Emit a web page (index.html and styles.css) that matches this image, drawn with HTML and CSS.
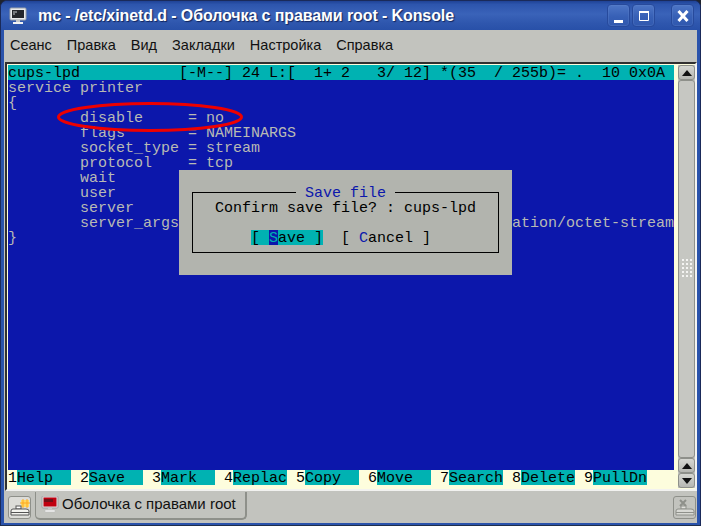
FILE: index.html
```html
<!DOCTYPE html>
<html lang="ru">
<head>
<meta charset="utf-8">
<title>Konsole</title>
<link rel="stylesheet" href="styles.css">
</head>
<body>
<div class="window">
  <header class="titlebar">
    <svg class="app-icon" width="18" height="18" viewBox="0 0 18 18"><rect x="1" y="1" width="16" height="12" rx="1" fill="#e8eaec" stroke="#9aa0a8"/><rect x="3" y="3" width="12" height="8" fill="#23262c"/><path d="M4 5h4M4 7h2" stroke="#c8ccd0"/><path d="M7 13h4v2H7z" fill="#c4c8cc"/><path d="M4 15h10v2H4z" fill="#f2f3f4"/></svg>
    <span class="title">mc - /etc/xinetd.d - Оболочка с правами root - Konsole</span>
    <div class="win-buttons">
      <button class="win-btn"><svg width="14" height="14" viewBox="0 0 14 14"><path d="M2 11h9v3H2z" fill="#fff"/></svg></button>
      <button class="win-btn"><svg width="14" height="14" viewBox="0 0 14 14"><path d="M2.500 2.500h9v9h-9z" fill="none" stroke="#fff"/><path d="M2 2h10v2H2z" fill="#fff"/></svg></button>
      <button class="win-btn win-close"><svg width="14" height="14" viewBox="0 0 14 14"><path d="M2.500 2l9 10M11.500 2l-9 10" stroke="#fff" stroke-width="3"/></svg></button>
    </div>
  </header>
  <div class="content">
    <nav class="menubar">
      <span>Сеанс</span><span>Правка</span><span>Вид</span><span>Закладки</span><span>Настройка</span><span>Справка</span>
    </nav>
    <div class="frame">
      <div class="terminal">
        <pre class="status">cups-lpd           [-M--] 24 L:[  1+ 2   3/ 12] *(35  / 255b)= .  10 0x0A</pre>
        <pre class="editor">service printer
{
        disable     = no
        flags       = NAMEINARGS
        socket_type = stream
        protocol    = tcp
        wait
        user
        server
        server_args                                     ation/octet-stream
}</pre>
        <div class="fkeys">
          <div class="fkey first"><span class="num">1</span><span class="fn">Help</span></div>
          <div class="fkey"><span class="num">2</span><span class="fn">Save</span></div>
          <div class="fkey"><span class="num">3</span><span class="fn">Mark</span></div>
          <div class="fkey"><span class="num">4</span><span class="fn">Replac</span></div>
          <div class="fkey"><span class="num">5</span><span class="fn">Copy</span></div>
          <div class="fkey"><span class="num">6</span><span class="fn">Move</span></div>
          <div class="fkey"><span class="num">7</span><span class="fn">Search</span></div>
          <div class="fkey"><span class="num">8</span><span class="fn">Delete</span></div>
          <div class="fkey"><span class="num">9</span><span class="fn">PullDn</span></div>
        </div>
        <svg class="annotation" width="190" height="34" viewBox="0 0 190 34"><ellipse cx="95" cy="17" rx="91.500" ry="13.500" fill="none" stroke="#ee0000" stroke-width="3"/></svg>
        <div class="dialog">
          <div class="dialog-box">
            <span class="dialog-title">Save file</span>
            <div class="dialog-msg">Confirm save file? : cups-lpd</div>
            <div class="dialog-actions">
              <span class="dbtn dbtn-on">[ <b class="hot-on">S</b>ave ]</span>
              <span class="dbtn">[ <b class="hot">C</b>ancel ]</span>
            </div>
          </div>
        </div>
      </div>
      <div class="scrollbar">
        <div class="sb-btn"><svg width="10" height="6" viewBox="0 0 10 6"><path d="M5 0l5 6H0z" fill="#111"/></svg></div>
        <div class="sb-slider">
          <svg width="10" height="18" viewBox="0 0 10 18"><g fill="#f4f4f2"><rect x="0" y="0" width="2" height="2"/><rect x="4" y="0" width="2" height="2"/><rect x="8" y="0" width="2" height="2"/><rect x="0" y="4" width="2" height="2"/><rect x="4" y="4" width="2" height="2"/><rect x="8" y="4" width="2" height="2"/><rect x="0" y="8" width="2" height="2"/><rect x="4" y="8" width="2" height="2"/><rect x="8" y="8" width="2" height="2"/><rect x="0" y="12" width="2" height="2"/><rect x="4" y="12" width="2" height="2"/><rect x="8" y="12" width="2" height="2"/><rect x="0" y="16" width="2" height="2"/><rect x="4" y="16" width="2" height="2"/><rect x="8" y="16" width="2" height="2"/></g></svg>
        </div>
        <div class="sb-btn"><svg width="10" height="6" viewBox="0 0 10 6"><path d="M5 0l5 6H0z" fill="#111"/></svg></div>
        <div class="sb-btn"><svg width="10" height="6" viewBox="0 0 10 6"><path d="M0 0h10L5 6z" fill="#111"/></svg></div>
      </div>
    </div>
    <div class="tabbar">
      <button class="tool-btn tool-new"><svg width="20" height="18" viewBox="0 0 20 18"><path d="M11 1h8v7h-8z" fill="#ffd860"/><path d="M13 0v9M17 0v9M10 4h10" stroke="#ffa820"/><rect x="6" y="7" width="5" height="3" fill="#fff" stroke="#555"/><path d="M1 16v-4q0-2 2-2h13q3 0 3 2v4z" fill="#f4f4f0" stroke="#555"/><path d="M1 13.500h18" stroke="#555"/></svg></button>
      <div class="tab">
        <svg width="18" height="17" viewBox="0 0 18 17"><rect x="1" y="0" width="16" height="12" rx="1" fill="#e4e4e4" stroke="#a0a0a0"/><rect x="2.500" y="1.500" width="13" height="9" fill="#c00010"/><path d="M3 3h9v3H3z" fill="#701018"/><path d="M7 12h4v2H7z" fill="#c8c8c8"/><path d="M4 14h10v2H4z" fill="#f2f2f2" stroke="#bbb" stroke-width=".5"/></svg>
        <span>Оболочка с правами root</span>
      </div>
      <button class="tool-btn tool-close"><svg width="20" height="18" viewBox="0 0 20 18"><path d="M5 1l6 6M11 1L5 7" stroke="#8e908a" stroke-width="2"/><rect x="6" y="7" width="5" height="3" fill="#e0e0dc" stroke="#8e908a"/><path d="M1 16v-4q0-2 2-2h13q3 0 3 2v4z" fill="#d8d9d4" stroke="#8e908a"/><path d="M1 13.500h18" stroke="#8e908a"/></svg></button>
    </div>
  </div>
</div>
</body>
</html>
```
FILE: styles.css
```css
* { box-sizing: border-box; }
html, body { margin: 0; padding: 0; background: #20242c; }
body { width: 701px; height: 526px; overflow: hidden; }
pre { margin: 0; font: inherit; }
button { margin: 0; padding: 0; font: inherit; }

.window {
  display: flex;
  flex-direction: column;
  height: 526px;
  background: #2a53ab;
  border: 1px solid #1a2a5a;
  border-bottom-color: #20304c;
  border-radius: 7px 7px 0 0;
  overflow: hidden;
}

.titlebar {
  flex: 0 0 29px;
  display: flex;
  align-items: center;
  padding: 0 6px 0 8px;
  background: linear-gradient(#1f4296 0, #2d55ad 12%, #3a63b9 45%, #2f57ae 75%, #2850a8 100%);
  color: #fff;
}
.app-icon { flex: none; }
.title {
  margin-left: 11px;
  font: bold 16px/20px "Liberation Sans", sans-serif;
  letter-spacing: -0.1px;
  white-space: nowrap;
  text-shadow: 1px 1px 1px #10245c;
}
.win-buttons { margin-left: auto; display: flex; gap: 2px; }
.win-btn {
  width: 23px;
  height: 23px;
  display: flex;
  align-items: center;
  justify-content: center;
  background: linear-gradient(#4e76c6, #3760b6 55%, #3058ae);
  border: 1px solid #274a9c;
  border-radius: 4px;
  box-shadow: inset 0 0 0 1px #5f84cc55;
}
.win-close { margin-left: 14px; }

.content {
  flex: 1;
  display: flex;
  flex-direction: column;
  min-height: 0;
  margin: 0 3px 2px;
  background: #c2c3be;
}

.menubar {
  flex: 0 0 30px;
  display: flex;
  align-items: center;
  gap: 15px;
  padding: 0 6px;
  font: 14.500px/16px "Liberation Sans", sans-serif;
  color: #111;
}

.frame {
  flex: 0 0 428px;
  margin-top: 2px;
  margin-left: 1px;
  display: flex;
  background: #fdfddd;
  border: 2px solid;
  border-color: #303030 #f2f2f0 #f2f2f0 #303030;
  padding: 1px 0 1px 1px;
}

.terminal {
  position: relative;
  flex: 0 0 666px;
  height: 420px;
  display: flex;
  flex-direction: column;
  background: #0c17ab;
  font: 15px/15px "Liberation Mono", monospace;
  color: #b8bab4;
}
.status {
  background: #00b2b2;
  color: #000;
  height: 15px;
  padding-top: 1px;
}
.editor {
  flex: 1;
  padding-top: 1px;
}
.fkeys {
  display: flex;
  height: 15px;
  background: #fdfddd;
  color: #000;
}
.fkey { display: flex; padding-left: 9px; }
.fkey.first { padding-left: 0; }
.fkey .num { width: 9px; padding-top: 1px; }
.fkey .fn { width: 54px; height: 15px; padding-top: 1px; background: #00b2b2; }

.annotation {
  position: absolute;
  left: 47px;
  top: 35px;
}

.dialog {
  position: absolute;
  left: 171px;
  top: 105px;
  width: 333px;
  height: 105px;
  padding: 22px 13px;
  background: #b2b4ae;
  color: #000;
}
.dialog-box {
  position: relative;
  height: 61px;
  border: 1px solid #000;
  padding: 7px 0 0 22px;
}
.dialog-title {
  position: absolute;
  left: 103px;
  top: -8px;
  height: 15px;
  padding: 1px 9px 0;
  background: #b2b4ae;
  color: #0c17ab;
  white-space: pre;
}
.dialog-msg { height: 30px; padding-top: 1px; white-space: pre; }
.dialog-actions {
  display: flex;
  gap: 18px;
  margin-left: 36px;
}
.dbtn { display: block; height: 15px; padding-top: 1px; white-space: pre; }
.dbtn b { font-weight: normal; }
.dbtn-on { background: #00b2b2; }
.hot-on {
  display: inline-block;
  height: 14px;
  background: #0c17ab;
  box-shadow: 0 -1px 0 #0c17ab;
  color: #00b2b2;
}
.hot { color: #0c17ab; }

.scrollbar {
  flex: 0 0 17px;
  margin-left: 4px;
  display: flex;
  flex-direction: column;
  height: 423px;
  background: #c2c3be;
}
.sb-btn {
  flex: 0 0 15px;
  display: flex;
  align-items: center;
  justify-content: center;
  background: linear-gradient(#d6d7d2, #b6b7b2);
  border: 1px solid #8e908a;
  border-radius: 3px;
}
.sb-slider {
  flex: 1;
  display: flex;
  align-items: flex-start;
  justify-content: center;
  padding-top: 178px;
  background: #c6c7c2;
  border: 1px solid #8e908a;
  border-radius: 3px;
}

.tabbar {
  flex: 1;
  display: flex;
  align-items: flex-start;
  padding: 1px 1px 0 4px;
}
.tool-btn {
  width: 23px;
  height: 23px;
  margin-top: 4px;
  display: flex;
  align-items: center;
  justify-content: center;
  background: #dcdcd8;
  border: 1px solid #8e908a;
  border-radius: 3px;
}
.tool-close { margin-left: auto; background: #c2c3be; }
.tab {
  width: 212px;
  height: 28px;
  margin-left: 4px;
  display: flex;
  align-items: center;
  gap: 3px;
  padding: 0 0 2px 5px;
  background: #c2c3be;
  border: 1px solid #8e908a;
  border-top: 0;
  border-right: 2px solid #8e908a;
  border-bottom: 2px solid #8e908a;
  border-radius: 0 0 5px 5px;
  font: 15px/16px "Liberation Sans", sans-serif;
  color: #111;
  white-space: nowrap;
}
```
